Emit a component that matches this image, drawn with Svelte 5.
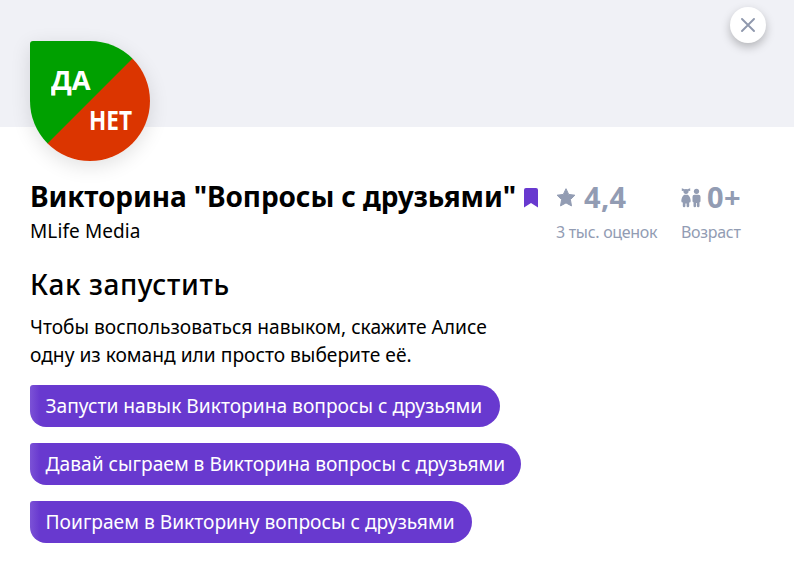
<script>
    const commands = [
        { text: 'Запусти навык Викторина вопросы с друзьями', width: 470 },
        { text: 'Давай сыграем в Викторина вопросы с друзьями', width: 491 },
        { text: 'Поиграем в Викторину вопросы с друзьями', width: 442 },
    ];
</script>

<div class="page">
    <header class="cover">
        <button class="close" aria-label="Закрыть">
            <svg width="14" height="14" viewBox="0 0 14 14">
                <path d="M1 1l12 12M13 1L1 13" fill="none" stroke="#8f98ad" stroke-width="1.9" stroke-linecap="round" />
            </svg>
        </button>
        <div class="logo">
            <span class="yes">ДА</span>
            <span class="no">НЕТ</span>
        </div>
    </header>

    <main>
        <section class="info">
            <div class="about">
                <div class="title">
                    <h1>Викторина "Вопросы с друзьями"</h1>
                    <svg class="bookmark" width="14" height="20" viewBox="0 0 14 20">
                        <path d="M2 0h10a2 2 0 0 1 2 2v17.5L7 15l-7 4.500V2a2 2 0 0 1 2-2z" fill="#6839cf" />
                    </svg>
                </div>
                <p class="developer">MLife Media</p>
            </div>

            <div class="stat rating">
                <div class="value">
                    <svg width="20" height="19" viewBox="-.5 0 20 19">
                        <path d="M9.500.7l2.700 5.700 6.200.8-4.500 4.400 1.100 6.300-5.500-3-5.500 3 1.100-6.300L.6 7.200l6.200-.8z" fill="#929cb3" stroke="#929cb3" stroke-linejoin="round" />
                    </svg>
                    <span>4,4</span>
                </div>
                <p>3 тыс. оценок</p>
            </div>

            <div class="stat age">
                <div class="value">
                    <!-- girl and boy -->
                    <svg width="20" height="20" viewBox="0 0 20 20" fill="#929cb3">
                        <path d="M.8.3l2.800 1a3 3 0 0 1 2.800 0l2.800-1v2.600l-1.700-.2a2.600 2.600 0 1 1-5 0L.8 2.900z" />
                        <path d="M3.300 6.800h3.400c1.800 1 2.900 3.500 3 6.200q0 1.500-1.500 1.500v3.500a1.300 1.300 0 0 1-2.600 0v-2.500H4.400V18a1.300 1.300 0 0 1-2.600 0v-3.500Q.3 14.500.3 13c.1-2.700 1.200-5.200 3-6.200z" />
                        <circle cx="15.500" cy="3.300" r="2.600" />
                        <path d="M13.500 6.800h4a2 2 0 0 1 2 2V13q0 1.300-1 1.300V18a1.300 1.300 0 0 1-2.600 0v-3h-.8v3a1.300 1.300 0 0 1-2.600 0v-3.700q-1 0-1-1.300V8.800a2 2 0 0 1 2-2z" />
                    </svg>
                    <span>0+</span>
                </div>
                <p>Возраст</p>
            </div>
        </section>

        <section class="launch">
            <h2>Как запустить</h2>
            <p>Чтобы воспользоваться навыком, скажите Алисе<br />одну из команд или просто выберите её.</p>
            <div class="commands">
                {#each commands as command}
                    <button class="command" style="width: {command.width}px">{command.text}</button>
                {/each}
            </div>
        </section>
    </main>
</div>

<style>
    :global(body) {
        background: #fff;
    }
    .page {
        position: relative;
        height: 565px;
        overflow: hidden;
        font-family: 'Noto Sans', 'Open Sans', sans-serif;
        color: #000;
    }
    h1, h2, p {
        margin: 0;
        white-space: nowrap;
    }
    button {
        border: 0;
        padding: 0;
        font-family: inherit;
        cursor: pointer;
    }
    .cover {
        position: relative;
        height: 127px;
        background: #f0f1f6;
    }
    .close {
        position: absolute;
        top: 7px;
        right: 28px;
        width: 36px;
        height: 36px;
        border-radius: 50%;
        background: #fff;
        box-shadow: 0 4px 10px rgba(0, 0, 0, 0.25);
        display: flex;
        align-items: center;
        justify-content: center;
    }
    .logo {
        position: absolute;
        top: 41px;
        left: 30px;
        width: 120px;
        height: 120px;
        border-radius: 3px 60px 60px 60px;
        background: linear-gradient(135deg, #00a000 49.8%, #db3500 50.2%);
        box-shadow: 0 5px 20px rgba(0, 0, 0, 0.12);
        font-family: 'Open Sans', sans-serif;
        font-weight: 700;
        font-size: 26px;
        line-height: 30px;
        color: #fff;
    }
    .yes, .no {
        position: absolute;
        transform-origin: left;
    }
    .yes {
        left: 21px;
        top: 24px;
        transform: scaleX(1.05);
    }
    .no {
        left: 59px;
        top: 64px;
        transform: scaleX(0.87);
    }
    main {
        padding: 49px 30px 0;
    }
    .info {
        display: flex;
        height: 74px;
    }
    .about {
        width: 526px;
    }
    .title {
        display: flex;
        align-items: center;
        justify-content: space-between;
        width: 508px;
        height: 40px;
    }
    h1 {
        font-size: 28px;
        line-height: 40px;
        font-weight: 700;
        letter-spacing: -0.11px;
    }
    .bookmark, .value svg {
        margin-top: 3px;
    }
    .developer {
        padding-top: 2px;
        font-size: 19px;
        line-height: 26px;
        letter-spacing: 0.1px;
    }
    .stat {
        color: #929cb3;
    }
    .stat p {
        padding-top: 2px;
        font-size: 16px;
        line-height: 28px;
        letter-spacing: -0.3px;
    }
    .rating {
        width: 125px;
    }
    .value {
        display: flex;
        align-items: center;
        height: 40px;
        font-size: 29px;
        font-weight: 700;
        letter-spacing: 0.3px;
    }
    .rating .value {
        gap: 8px;
    }
    .age .value {
        gap: 6px;
    }
    h2 {
        height: 63px;
        font-size: 28px;
        line-height: 68px;
        font-weight: 500;
        letter-spacing: 0.6px;
    }
    .launch p {
        font-size: 19.2px;
        line-height: 28px;
    }
    .commands {
        display: flex;
        flex-direction: column;
        gap: 16px;
        margin-top: 16px;
    }
    .command {
        height: 42px;
        padding-left: 15.5px;
        border-radius: 3px 21px 21px 16px;
        background: linear-gradient(90deg, #7b52d6, #6839cf 10px);
        color: #fff;
        font-size: 19.2px;
        line-height: 42px;
        text-align: left;
        white-space: nowrap;
    }
</style>
